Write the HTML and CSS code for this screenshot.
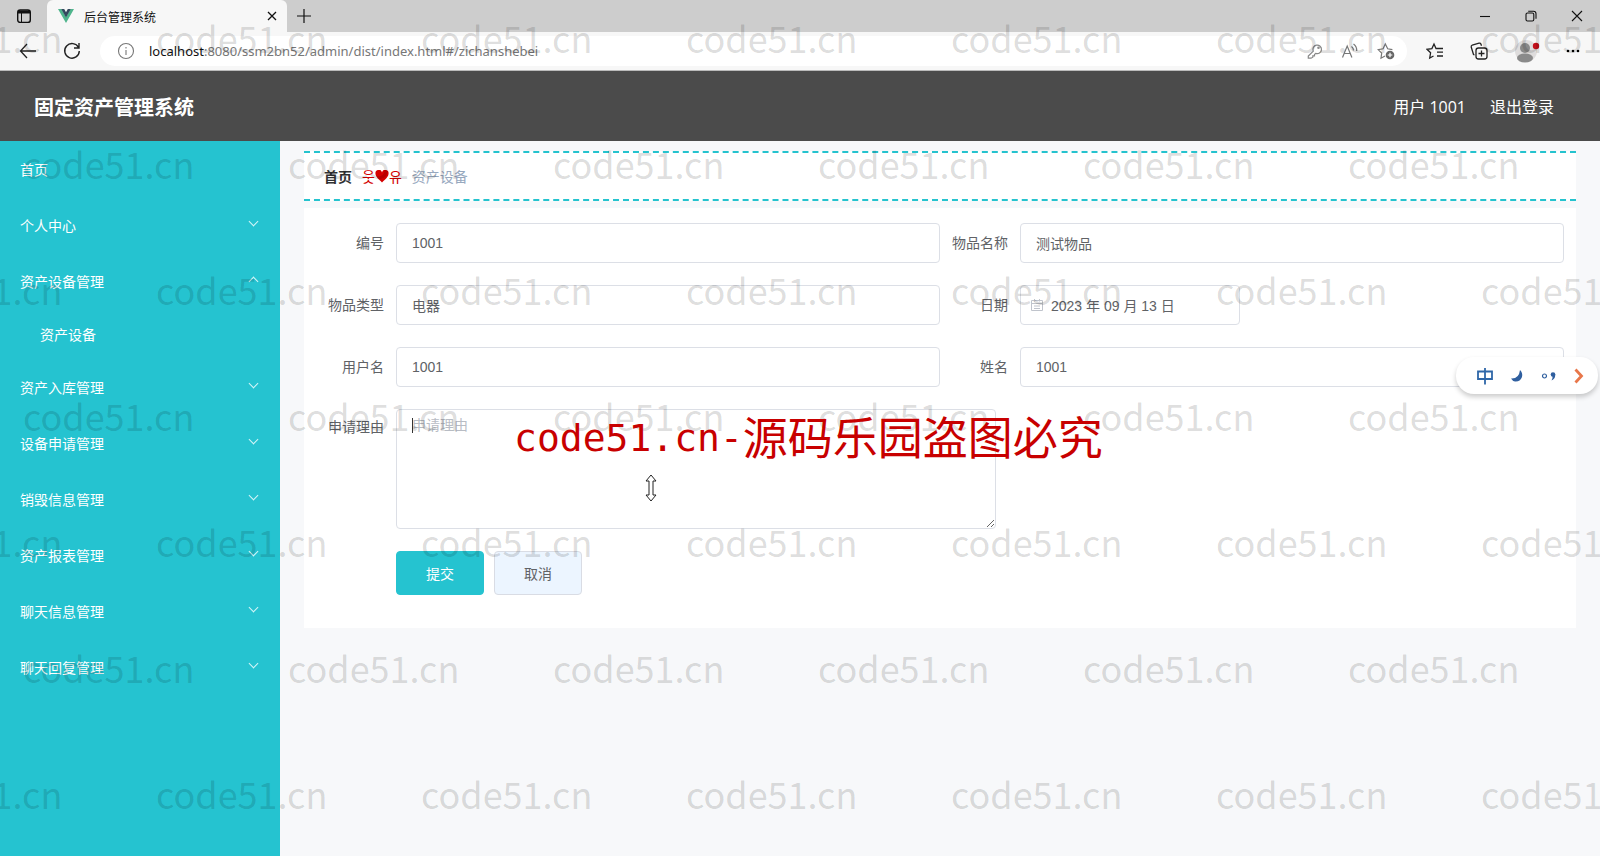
FILE: index.html
```html
<!DOCTYPE html>
<html lang="zh-CN">
<head>
<meta charset="utf-8">
<title>后台管理系统</title>
<link rel="stylesheet" href="styles.css">
</head>
<body>
<div class="screen">
  <div class="tabstrip">
    <button class="tab-actions" aria-label="标签页操作"><svg width="16" height="16" viewBox="0 0 16 16" fill="none" stroke="#111" stroke-width="1.4"><rect x="1.7" y="2" width="12.6" height="12.4" rx="2.5"/><path d="M2 4h12" stroke-width="3"/><path d="M5.500 5v9" stroke-width="1"/></svg></button>
    <div class="tab">
      <svg width="16" height="14" viewBox="0 0 16 14"><path d="M0 0h3.4L8 8l4.6-8H16L8 14z" fill="#4fb58c"/><path d="M3.2 0h3L8 3.2 9.800 0h3L8 8.400z" fill="#34495e"/></svg>
      <span class="tab-title">后台管理系统</span>
      <button aria-label="关闭标签页"><svg width="10" height="10" viewBox="0 0 10 10" stroke="#111" stroke-width="1.3"><path d="M1 1l8 8M9 1L1 9"/></svg></button>
    </div>
    <button class="new-tab" aria-label="新建标签页"><svg width="14" height="14" viewBox="0 0 14 14" stroke="#111" stroke-width="1.2"><path d="M7 0v14M0 7h14"/></svg></button>
    <div class="window-buttons">
      <button aria-label="最小化"><svg width="12" height="12" viewBox="0 0 12 12" stroke="#111" stroke-width="1.1"><path d="M1 6.500h10"/></svg></button>
      <button aria-label="还原"><svg width="12" height="12" viewBox="0 0 12 12" fill="none" stroke="#111" stroke-width="1.1"><rect x="1" y="3" width="7.800" height="8" rx="1.500"/><path d="M3.200 1.200h5.300a2.500 2.500 0 0 1 2.500 2.500v5"/></svg></button>
      <button aria-label="关闭"><svg width="12" height="12" viewBox="0 0 12 12" stroke="#111" stroke-width="1.100"><path d="M1 1l10 10M11 1L1 11"/></svg></button>
    </div>
  </div>

  <div class="toolbar">
    <button class="nav-button" aria-label="后退"><svg width="18" height="16" viewBox="0 0 18 16" fill="none" stroke="#222" stroke-width="1.300"><path d="M17 8H1.500M8 1L1.500 8 8 15"/></svg></button>
    <button class="nav-button" aria-label="刷新"><svg width="18" height="18" viewBox="0 0 18 18" fill="none" stroke="#222" stroke-width="1.400"><path d="M15.500 5.500A7.300 7.300 0 1 0 16.300 9M16 1v5h-5"/></svg></button>
    <div class="address">
      <svg width="18" height="18" viewBox="0 0 18 18" fill="none" stroke="#777" stroke-width="1.100"><circle cx="9" cy="9" r="7.500"/><path d="M9 8v5M9 5v1.500"/></svg>
      <span class="url"><b>localhost</b>:8080/ssm2bn52/admin/dist/index.html#/zichanshebei</span>
      <div class="address-icons">
        <button aria-label="密码"><svg width="16" height="16" viewBox="0 0 16 16" fill="none" stroke="#888" stroke-width="1.200"><path d="M6.300 8.200a4.300 4.300 0 1 1 2.400 2.200L7.500 11.500v1.300H5.800v1.400L4 15.200H1.300V13z"/><circle cx="11.500" cy="4.700" r=".7"/></svg></button>
        <button aria-label="朗读"><svg width="18" height="16" viewBox="0 0 18 16" fill="none" stroke="#777" stroke-width="1.200"><path d="M1.500 14.500L6.200 3l4.700 11.500M3.200 10.500h6M10.500 3.500q2 1.500 2 4M12.500 1q3.500 2.500 3.200 7"/></svg></button>
        <button aria-label="收藏此页"><svg width="18" height="18" viewBox="0 0 18 18" fill="none" stroke="#777" stroke-width="1.200"><path d="M8 14l-4 2.200.7-5L1.200 7.600l4.900-.8L8.300 2l2.400 4.800 4.700.8"/><circle cx="13" cy="13" r="4.300" fill="#666" stroke="none"/><path d="M13 10.700v4.600M10.700 13h4.600" stroke="#fff"/></svg></button>
      </div>
    </div>
    <div class="toolbar-icons">
      <button aria-label="收藏夹"><svg width="18" height="18" viewBox="0 0 18 18" fill="none" stroke="#222" stroke-width="1.300"><path d="M10.500 6.500H10L8 2 5.900 6.600 1 7.300l3.600 3.500-.9 5.200L7.500 14M10 6.500h7M11 10.200h6M11 14h6"/></svg></button>
      <button aria-label="集锦"><svg width="18" height="18" viewBox="0 0 18 18" fill="none" stroke="#222" stroke-width="1.300"><rect x="6" y="6" width="11" height="11" rx="2.500"/><path d="M11.500 8.500v6M8.500 11.500h6M4.500 12.800L3.500 12.500 1.200 5Q1 3.500 2.300 3L9 1.200q1.500-.3 2 1l.5 1.500"/></svg></button>
      <button aria-label="个人资料"><svg width="26" height="24" viewBox="0 0 26 24"><circle cx="12" cy="12" r="11" fill="#dedcdc"/><circle cx="11" cy="9" r="5" fill="#8a8a8a"/><ellipse cx="11" cy="19" rx="8" ry="4.500" fill="#8a8a8a"/><circle cx="22" cy="7" r="3.200" fill="#c4101c"/></svg></button>
      <button aria-label="更多"><svg width="14" height="4" viewBox="0 0 14 4"><circle cx="2" cy="2" r="1.300"/><circle cx="7" cy="2" r="1.300"/><circle cx="12" cy="2" r="1.300"/></svg></button>
    </div>
  </div>

  <header class="app-header">
    <h1>固定资产管理系统</h1>
    <div class="account"><span>用户 1001</span><a href="#logout">退出登录</a></div>
  </header>

  <div class="app-body">
    <nav class="sidebar">
      <a href="#home">首页</a>
      <a href="#me">个人中心<i class="chevron"></i></a>
      <a href="#equipment">资产设备管理<i class="chevron up"></i></a>
      <a href="#list" class="sub">资产设备</a>
      <a href="#storage">资产入库管理<i class="chevron"></i></a>
      <a href="#apply">设备申请管理<i class="chevron"></i></a>
      <a href="#destroy">销毁信息管理<i class="chevron"></i></a>
      <a href="#report">资产报表管理<i class="chevron"></i></a>
      <a href="#chat">聊天信息管理<i class="chevron"></i></a>
      <a href="#reply">聊天回复管理<i class="chevron"></i></a>
    </nav>
    <main>
      <div class="breadcrumb"><a href="#home">首页</a><span class="divider">웃<svg width="14" height="13" viewBox="0 0 14 13"><path d="M7 12.500C4 9.500.5 7 .5 3.800A3.300 3.300 0 0 1 7 2.500a3.300 3.300 0 0 1 6.500 1.300C13.500 7 10 9.500 7 12.500z" fill="#d40000"/></svg>유</span><span class="current">资产设备</span></div>
      <form class="form">
        <div class="field"><label for="code">编号</label><input id="code" type="text" value="1001"></div>
        <div class="field"><label for="name">物品名称</label><input id="name" type="text" value="测试物品"></div>
        <div class="field"><label for="type">物品类型</label><input id="type" type="text" value="电器"></div>
        <div class="field"><label for="date">日期</label><div class="date"><svg width="14" height="14" viewBox="0 0 14 14" fill="none" stroke="#c0c4cc"><path d="M1.500 2.500h11v10h-11zM1.500 5.500h11M4 8h6M4 10.500h6M4.500 1v2.500M9.500 1v2.500"/></svg><input id="date" type="text" value="2023 年 09 月 13 日"></div></div>
        <div class="field"><label for="user">用户名</label><input id="user" type="text" value="1001"></div>
        <div class="field"><label for="real">姓名</label><input id="real" type="text" value="1001"></div>
        <div class="field wide"><label for="reason">申请理由</label><div class="reason"><textarea id="reason" placeholder="申请理由"></textarea><span class="caret"></span>
          <svg class="pointer" width="12" height="28" viewBox="0 0 12 28" fill="#fff" stroke="#222"><path d="M6 1l5 6H8v14h3l-5 6-5-6h3V7H1z"/></svg></div></div>
        <div class="actions"><button type="button" class="primary">提交</button><button type="button">取消</button></div>
      </form>
    </main>
  </div>

  <div class="ime">
    <svg width="18" height="18" viewBox="0 0 18 18" fill="none" stroke="#2f67a8" stroke-width="1.800"><path d="M2 4.500h14v7.500H2zM9 1v16.500"/></svg>
    <svg width="12" height="12" viewBox="0 0 12 12"><path d="M9 0Q12 3 11 7 9 12 4 11.500 1.500 11 0 8.500 8 9 9 0z" fill="#2f5f9f"/></svg>
    <svg width="16" height="10" viewBox="0 0 16 10"><circle cx="3.500" cy="5" r="2" fill="none" stroke="#2f5f9f" stroke-width="1.200"/><circle cx="12" cy="3.500" r="2.300" fill="#2f5f9f"/><path d="M14.300 3.500Q14.300 8 10.500 9.500 12 7 11.500 5z" fill="#2f5f9f"/></svg>
    <svg width="10" height="16" viewBox="0 0 10 16" fill="none" stroke="#e8774a" stroke-width="2.800"><path d="M1.500 1.500L7.500 8l-6 6.500"/></svg>
  </div>

  <div class="watermark">
    <div class="mark-row even"><span>code51.cn</span><span>code51.cn</span><span>code51.cn</span><span>code51.cn</span><span>code51.cn</span><span>code51.cn</span><span>code51.cn</span></div>
    <div class="mark-row"><span>code51.cn</span><span>code51.cn</span><span>code51.cn</span><span>code51.cn</span><span>code51.cn</span><span>code51.cn</span></div>
    <div class="mark-row even"><span>code51.cn</span><span>code51.cn</span><span>code51.cn</span><span>code51.cn</span><span>code51.cn</span><span>code51.cn</span><span>code51.cn</span></div>
    <div class="mark-row"><span>code51.cn</span><span>code51.cn</span><span>code51.cn</span><span>code51.cn</span><span>code51.cn</span><span>code51.cn</span></div>
    <div class="mark-row even"><span>code51.cn</span><span>code51.cn</span><span>code51.cn</span><span>code51.cn</span><span>code51.cn</span><span>code51.cn</span><span>code51.cn</span></div>
    <div class="mark-row"><span>code51.cn</span><span>code51.cn</span><span>code51.cn</span><span>code51.cn</span><span>code51.cn</span><span>code51.cn</span></div>
    <div class="mark-row even"><span>code51.cn</span><span>code51.cn</span><span>code51.cn</span><span>code51.cn</span><span>code51.cn</span><span>code51.cn</span><span>code51.cn</span></div>
  </div>
  <div class="notice"><span class="latin">code51.cn-</span><span>源码乐园盗图必究</span></div>
</div>
</body>
</html>
```
FILE: styles.css
```css
* { box-sizing: border-box; }
body {
  margin: 0;
  font-family: "Liberation Sans", "Noto Sans CJK SC", sans-serif;
  font-size: 14px;
  color: #606266;
}
button { border: 0; padding: 0; background: none; font: inherit; color: inherit; }
a { color: inherit; text-decoration: none; }
svg { display: block; flex: none; }

.screen {
  position: relative;
  display: flex;
  flex-direction: column;
  min-height: 100vh;
  overflow: hidden;
}

/* Browser chrome */
.tabstrip { display: flex; align-items: stretch; height: 32px; background: #cdcdcd; }
.tab-actions { padding: 0 15px 0 16px; }
.tab {
  display: flex;
  align-items: center;
  gap: 10px;
  width: 240px;
  padding: 0 10px 0 11px;
  background: #f7f7f7;
  border-radius: 6px 6px 0 0;
}
.tab-title { flex: 1; font: 12px "Noto Sans CJK SC", sans-serif; color: #111; }
.new-tab { margin-left: 10px; }
.window-buttons { display: flex; gap: 34px; margin-left: auto; padding-right: 17px; }
.toolbar {
  display: flex;
  align-items: center;
  height: 39px;
  padding: 0 20px 0 19px;
  background: #f7f7f7;
  border-bottom: 1px solid #bbb;
}
.nav-button { width: 20px; margin-right: 24px; }
.address {
  flex: 1;
  display: flex;
  align-items: center;
  gap: 14px;
  height: 30px;
  margin-left: -7px;
  padding: 0 12px 0 17px;
  border-radius: 15px;
  background: #fff;
}
.url { font: 13px "Noto Sans", sans-serif; color: #777; }
.url b { font-weight: 400; color: #111; }
.address-icons { display: flex; align-items: center; gap: 18px; margin-left: auto; }
.toolbar-icons { display: flex; align-items: center; gap: 26px; margin-left: 19px; }

/* Application header */
.app-header {
  display: flex;
  justify-content: space-between;
  align-items: center;
  height: 70px;
  padding: 0 46px 0 34px;
  background: #4b4b4b;
  color: #fff;
}
.app-header h1 { margin: 0; font: 700 20px "Noto Sans CJK SC", sans-serif; }
.account { display: flex; gap: 24px; font: 16px "Open Sans", "Noto Sans CJK SC", sans-serif; }

.app-body { flex: 1; display: flex; background: #f7f8fa; }
.sidebar { flex: none; width: 280px; background: #25c3d0; color: #fff; }
.sidebar a {
  display: flex;
  justify-content: space-between;
  align-items: center;
  height: 56px;
  padding: 0 22px 0 20px;
}
.sidebar .sub { height: 50px; padding-left: 40px; }
.chevron {
  width: 7px;
  height: 7px;
  margin: 0 1px 8px 0;
  border: solid #d5f5f7;
  border-width: 0 1px 1px 0;
  transform: rotate(45deg);
}
.chevron.up { margin-bottom: 0; transform: rotate(225deg); }

main { flex: 1; padding: 10px 24px; }
.breadcrumb {
  display: flex;
  align-items: center;
  gap: 10px;
  height: 50px;
  padding: 0 20px;
  background: #fff;
  border: dashed #25c3ce;
  border-width: 2px 0;
}
.breadcrumb a { font-weight: 700; color: #303133; }
.divider { display: flex; align-items: center; font-family: "Noto Sans CJK KR", sans-serif; color: #d40000; }
.current { color: #97a8be; }

.form {
  display: grid;
  grid-template-columns: 1fr 1fr;
  row-gap: 22px;
  margin-top: 7px;
  padding: 15px 12px 33px;
  background: #fff;
}
.field { display: flex; }
.field label { flex: none; width: 80px; padding-right: 12px; line-height: 40px; text-align: right; }
.field.wide label { line-height: 36px; }
.field input {
  flex: 1;
  min-width: 0;
  height: 40px;
  padding: 0 15px;
  border: 1px solid #dcdfe6;
  border-radius: 4px;
  background: #fff;
  font: inherit;
  color: #606266;
}
.date { position: relative; display: flex; width: 220px; }
.date svg { position: absolute; left: 10px; top: 13px; }
.date input { padding-left: 30px; }
.wide, .actions { grid-column: 1 / -1; }
.reason { position: relative; display: flex; width: 600px; }
.reason textarea {
  flex: 1;
  height: 120px;
  padding: 5px 15px;
  border: 1px solid #dcdfe6;
  border-radius: 4px;
  font: inherit;
  line-height: 21px;
}
.reason textarea::placeholder { color: #b8bcc4; }
.caret { position: absolute; left: 16px; top: 9px; width: 1px; height: 15px; background: #333; }
.pointer { position: absolute; left: 249px; top: 65px; }
.actions { display: flex; gap: 10px; padding-left: 80px; }
.actions button {
  width: 88px;
  height: 44px;
  border: 1px solid #d9dce4;
  border-radius: 4px;
  background: #ecf5ff;
}
.actions .primary { border-color: #25c3d0; background: #25c3d0; color: #fff; }

/* Floating input method bar */
.ime {
  position: absolute;
  right: 2px;
  top: 357px;
  display: flex;
  align-items: center;
  justify-content: space-between;
  width: 142px;
  height: 37px;
  padding: 0 14px 0 20px;
  border-radius: 18px;
  background: #fff;
  box-shadow: 0 3px 5px rgba(0, 0, 0, .2);
}

.watermark { position: absolute; inset: 0; overflow: hidden; pointer-events: none; }
.mark-row {
  display: flex;
  height: 126px;
  padding-left: 23px;
  font: 400 36px/75px "Noto Sans CJK SC", sans-serif;
  color: rgba(0, 0, 0, .14);
}
.mark-row span { flex: none; width: 265px; }
.mark-row.even { margin-left: -132px; }
.notice {
  position: absolute;
  left: 514px;
  top: 406px;
  display: flex;
  font: 45px/60px "Noto Sans CJK SC", sans-serif;
  color: #c80000;
  white-space: nowrap;
  pointer-events: none;
}
.latin { font: 38px/64px "DejaVu Sans Mono", monospace; }
```
